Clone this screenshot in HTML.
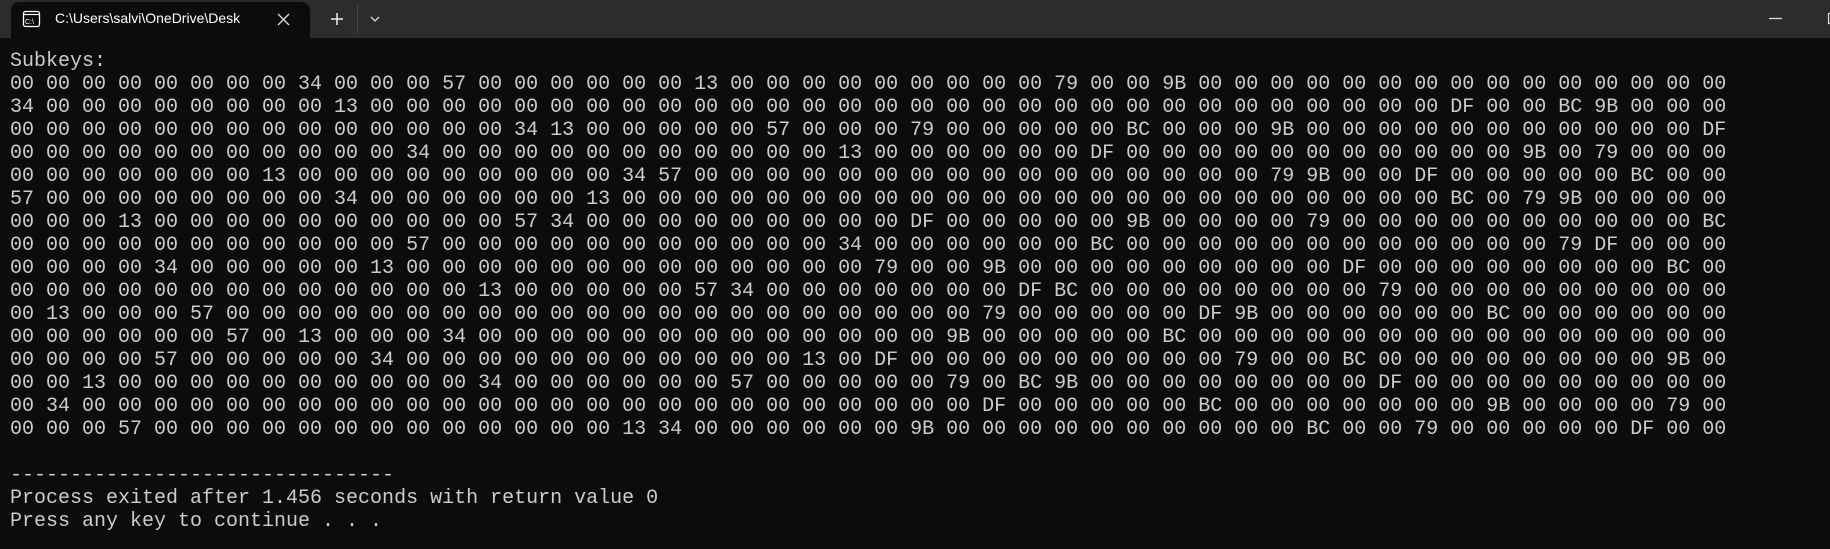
<!DOCTYPE html>
<html><head><meta charset="utf-8"><style>
html,body{margin:0;padding:0;background:#0c0c0c;width:1830px;height:549px;overflow:hidden;}
.bar{position:absolute;left:0;top:0;width:1830px;height:38px;background:#2c2c2c;}
.tab{position:absolute;left:11px;top:2px;width:299px;height:36px;background:#0c0c0c;border-radius:8px 8px 0 0;}
.title{position:absolute;left:55px;top:10px;font:14px "Liberation Sans",sans-serif;color:#fff;white-space:nowrap;}
.term{position:absolute;left:10px;top:50px;font:20px/23px "Liberation Mono",monospace;color:#cccccc;white-space:pre;margin:0;}
</style></head><body>
<div class="bar"></div>
<div class="tab"></div>
<svg style="position:absolute;left:0;top:0" width="1830" height="38">
 <rect x="23.5" y="11.5" width="16" height="15" rx="2" fill="none" stroke="#fff" stroke-width="1.3"/>
 <line x1="23.5" y1="14.5" x2="39.5" y2="14.5" stroke="#fff" stroke-width="1.2"/>
 <text x="25" y="24" font-family="Liberation Sans" font-size="7" fill="#fff">C:\</text>
 <path d="M278 14 L289 25 M289 14 L278 25" stroke="#ddd" stroke-width="1.3"/>
 <path d="M337 13 V25 M331 19 H343" stroke="#eee" stroke-width="1.5"/>
 <line x1="357.5" y1="5" x2="357.5" y2="34" stroke="#444" stroke-width="1"/>
 <path d="M371 17 L375 21 L379 17" stroke="#ddd" stroke-width="1.3" fill="none"/>
 <line x1="1769" y1="18.5" x2="1782" y2="18.5" stroke="#ddd" stroke-width="1.3"/>
 <rect x="1828.5" y="13.5" width="10" height="10" fill="none" stroke="#ddd" stroke-width="1.2"/>
</svg>
<div class="title">C:\Users\salvi\OneDrive\Desk</div>
<pre class="term">Subkeys:
00 00 00 00 00 00 00 00 34 00 00 00 57 00 00 00 00 00 00 13 00 00 00 00 00 00 00 00 00 79 00 00 9B 00 00 00 00 00 00 00 00 00 00 00 00 00 00 00
34 00 00 00 00 00 00 00 00 13 00 00 00 00 00 00 00 00 00 00 00 00 00 00 00 00 00 00 00 00 00 00 00 00 00 00 00 00 00 00 DF 00 00 BC 9B 00 00 00
00 00 00 00 00 00 00 00 00 00 00 00 00 00 34 13 00 00 00 00 00 57 00 00 00 79 00 00 00 00 00 BC 00 00 00 9B 00 00 00 00 00 00 00 00 00 00 00 DF
00 00 00 00 00 00 00 00 00 00 00 34 00 00 00 00 00 00 00 00 00 00 00 13 00 00 00 00 00 00 DF 00 00 00 00 00 00 00 00 00 00 00 9B 00 79 00 00 00
00 00 00 00 00 00 00 13 00 00 00 00 00 00 00 00 00 34 57 00 00 00 00 00 00 00 00 00 00 00 00 00 00 00 00 79 9B 00 00 DF 00 00 00 00 00 BC 00 00
57 00 00 00 00 00 00 00 00 34 00 00 00 00 00 00 13 00 00 00 00 00 00 00 00 00 00 00 00 00 00 00 00 00 00 00 00 00 00 00 BC 00 79 9B 00 00 00 00
00 00 00 13 00 00 00 00 00 00 00 00 00 00 57 34 00 00 00 00 00 00 00 00 00 DF 00 00 00 00 00 9B 00 00 00 00 79 00 00 00 00 00 00 00 00 00 00 BC
00 00 00 00 00 00 00 00 00 00 00 57 00 00 00 00 00 00 00 00 00 00 00 34 00 00 00 00 00 00 BC 00 00 00 00 00 00 00 00 00 00 00 00 79 DF 00 00 00
00 00 00 00 34 00 00 00 00 00 13 00 00 00 00 00 00 00 00 00 00 00 00 00 79 00 00 9B 00 00 00 00 00 00 00 00 00 DF 00 00 00 00 00 00 00 00 BC 00
00 00 00 00 00 00 00 00 00 00 00 00 00 13 00 00 00 00 00 57 34 00 00 00 00 00 00 00 DF BC 00 00 00 00 00 00 00 00 79 00 00 00 00 00 00 00 00 00
00 13 00 00 00 57 00 00 00 00 00 00 00 00 00 00 00 00 00 00 00 00 00 00 00 00 00 79 00 00 00 00 00 DF 9B 00 00 00 00 00 00 BC 00 00 00 00 00 00
00 00 00 00 00 00 57 00 13 00 00 00 34 00 00 00 00 00 00 00 00 00 00 00 00 00 9B 00 00 00 00 00 BC 00 00 00 00 00 00 00 00 00 00 00 00 00 00 00
00 00 00 00 57 00 00 00 00 00 34 00 00 00 00 00 00 00 00 00 00 00 13 00 DF 00 00 00 00 00 00 00 00 00 79 00 00 BC 00 00 00 00 00 00 00 00 9B 00
00 00 13 00 00 00 00 00 00 00 00 00 00 34 00 00 00 00 00 00 57 00 00 00 00 00 79 00 BC 9B 00 00 00 00 00 00 00 00 DF 00 00 00 00 00 00 00 00 00
00 34 00 00 00 00 00 00 00 00 00 00 00 00 00 00 00 00 00 00 00 00 00 00 00 00 00 DF 00 00 00 00 00 BC 00 00 00 00 00 00 00 9B 00 00 00 00 79 00
00 00 00 57 00 00 00 00 00 00 00 00 00 00 00 00 00 13 34 00 00 00 00 00 00 9B 00 00 00 00 00 00 00 00 00 00 BC 00 00 79 00 00 00 00 00 DF 00 00

--------------------------------
Process exited after 1.456 seconds with return value 0
Press any key to continue . . .</pre>
</body></html>
